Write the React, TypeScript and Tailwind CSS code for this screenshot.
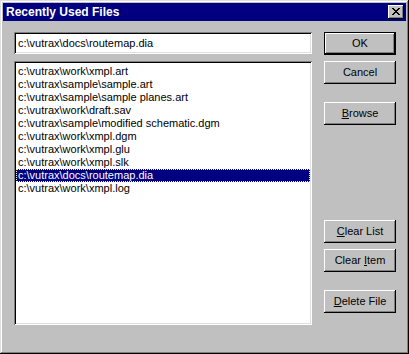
import React from "react";

const files = [
  "c:\\vutrax\\work\\xmpl.art",
  "c:\\vutrax\\sample\\sample.art",
  "c:\\vutrax\\sample\\sample planes.art",
  "c:\\vutrax\\work\\draft.sav",
  "c:\\vutrax\\sample\\modified schematic.dgm",
  "c:\\vutrax\\work\\xmpl.dgm",
  "c:\\vutrax\\work\\xmpl.glu",
  "c:\\vutrax\\work\\xmpl.slk",
  "c:\\vutrax\\docs\\routemap.dia",
  "c:\\vutrax\\work\\xmpl.log",
];

const font = "font-['Liberation_Sans',Arial,sans-serif]";

function Btn({ children, className = "" }: { children: React.ReactNode; className?: string }) {
  return (
    <div
      className={`h-[23px] w-[72px] bg-[#c0c0c0] flex items-center justify-center text-[11px] text-black shadow-[inset_-1px_-1px_#000,inset_1px_1px_#fff,inset_-2px_-2px_#808080] ${className}`}
    >
      {children}
    </div>
  );
}

export default function App() {
  return (
    <div
      className={`w-[409px] h-[354px] bg-[#c0c0c0] p-[3px] flex flex-col ${font} shadow-[inset_-1px_-1px_#000,inset_1px_1px_#dfdfdf,inset_-2px_-2px_#808080,inset_2px_2px_#fff]`}
    >
      <div className="h-[18px] bg-[#000080] flex items-center justify-between pl-[3px] pr-[2px]">
        <span className="text-white font-bold text-[12px] leading-none">Recently Used Files</span>
        <div className="w-[16px] h-[14px] bg-[#c0c0c0] flex items-center justify-center shadow-[inset_-1px_-1px_#000,inset_1px_1px_#fff,inset_-2px_-2px_#808080]">
          <svg width="8" height="7" viewBox="0 0 8 7" className="mb-[1px]">
            <path d="M0 0h2v1h1v1h2v-1h1v-1h2v1h-1v1h-1v1h-1v1h1v1h1v1h1v1h-2v-1h-1v-1h-2v1h-1v1h-2v-1h1v-1h1v-1h1v-1h-1v-1h-1v-1h-1z" fill="#000" />
          </svg>
        </div>
      </div>
      <div className="flex flex-1 pt-[11px] pl-[11px] gap-[12px]">
        <div className="w-[298px] flex flex-col gap-[7px]">
          <div className="h-[22px] bg-white flex items-center pl-[4px] text-[11px] text-black shadow-[inset_1px_1px_#808080,inset_-1px_-1px_#fff,inset_2px_2px_#000,inset_-2px_-2px_#dfdfdf]">
            c:\vutrax\docs\routemap.dia
          </div>
          <div className="h-[264px] bg-white px-[2px] pt-[4px] shadow-[inset_1px_1px_#808080,inset_-1px_-1px_#fff,inset_2px_2px_#000,inset_-2px_-2px_#dfdfdf]">
            {files.map((f, i) => {
              const sel = i === 8;
              return (
                <div
                  key={i}
                  className={`h-[13px] leading-[13px] pl-[2px] text-[11px] whitespace-nowrap ${
                    sel
                      ? "bg-[#000080] text-white outline-1 outline-dotted outline-offset-[-1px] outline-[#ffff80]"
                      : "text-black"
                  }`}
                >
                  {f}
                </div>
              );
            })}
          </div>
        </div>
        <div className="w-[72px] flex flex-col">
          <Btn className="border border-black shadow-[inset_-1px_-1px_#000,inset_1px_1px_#fff,inset_-2px_-2px_#808080]">OK</Btn>
          <Btn className="mt-[6px]">Cancel</Btn>
          <Btn className="mt-[18px]">
            <span>
              <u className="underline-offset-[1px]">B</u>rowse
            </span>
          </Btn>
          <Btn className="mt-[95px]">
            <span>
              <u className="underline-offset-[1px]">C</u>lear List
            </span>
          </Btn>
          <Btn className="mt-[6px]">
            <span>
              Clear <u className="underline-offset-[1px]">I</u>tem
            </span>
          </Btn>
          <Btn className="mt-[18px]">
            <span>
              <u className="underline-offset-[1px]">D</u>elete File
            </span>
          </Btn>
        </div>
      </div>
    </div>
  );
}
